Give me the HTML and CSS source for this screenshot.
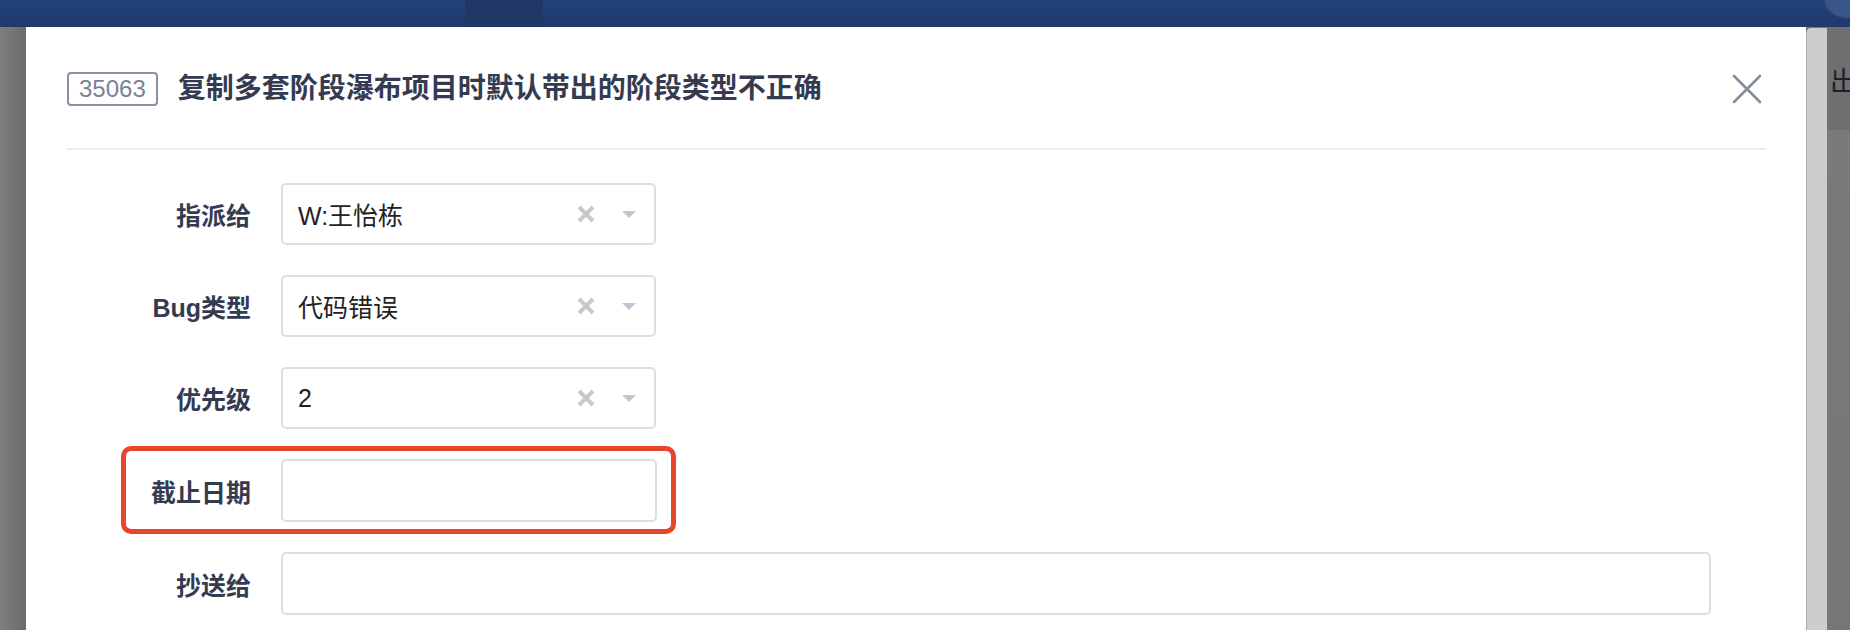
FILE: index.html
```html
<!DOCTYPE html>
<html lang="zh-CN">
<head>
  <meta charset="UTF-8">
  <meta name="viewport" content="width=device-width, initial-scale=1.0">
  <title>编辑Bug</title>
  <link rel="stylesheet" href="styles.css">
</head>
<body>
  <div class="topbar">
    <div class="topbar-tab"></div>
    <div class="topbar-avatar"></div>
  </div>

  <div class="stage">
    <div class="backdrop-left"></div>

    <div class="modal">
      <div class="modal-header">
        <span class="bug-id">35063</span>
        <h1 class="bug-title">复制多套阶段瀑布项目时默认带出的阶段类型不正确</h1>
        <button class="close-btn" type="button" aria-label="关闭">
          <svg width="30" height="30" viewBox="0 0 30 30">
            <path d="M2 2 L28 28 M28 2 L2 28" stroke="#878c9d" stroke-width="2.6" stroke-linecap="round" fill="none"/>
          </svg>
        </button>
      </div>

      <form class="bug-form">
        <div class="form-row">
          <label class="form-label">指派给</label>
          <div class="select-box">
            <span class="select-value">W:王怡栋</span>
            <span class="select-clear">
              <svg width="20" height="20" viewBox="0 0 20 20"><path d="M3 3 L17 17 M17 3 L3 17" stroke="#c9c9c9" stroke-width="4" fill="none"/></svg>
            </span>
            <span class="select-caret"></span>
          </div>
        </div>

        <div class="form-row">
          <label class="form-label">Bug类型</label>
          <div class="select-box">
            <span class="select-value">代码错误</span>
            <span class="select-clear">
              <svg width="20" height="20" viewBox="0 0 20 20"><path d="M3 3 L17 17 M17 3 L3 17" stroke="#c9c9c9" stroke-width="4" fill="none"/></svg>
            </span>
            <span class="select-caret"></span>
          </div>
        </div>

        <div class="form-row">
          <label class="form-label">优先级</label>
          <div class="select-box">
            <span class="select-value">2</span>
            <span class="select-clear">
              <svg width="20" height="20" viewBox="0 0 20 20"><path d="M3 3 L17 17 M17 3 L3 17" stroke="#c9c9c9" stroke-width="4" fill="none"/></svg>
            </span>
            <span class="select-caret"></span>
          </div>
        </div>

        <div class="form-row highlighted">
          <label class="form-label" for="deadline">截止日期</label>
          <input class="text-input short" type="text" id="deadline">
          <div class="highlight-mark"></div>
        </div>

        <div class="form-row">
          <label class="form-label" for="mailto">抄送给</label>
          <input class="text-input wide" type="text" id="mailto">
        </div>
      </form>
    </div>

    <div class="scrollbar"></div>

    <div class="backdrop-right">
      <span class="backdrop-text">出</span>
    </div>
  </div>
</body>
</html>
```

FILE: styles.css
```css
html, body {
  margin: 0;
  height: 630px;
  overflow: hidden;
}

body {
  font-family: "Liberation Sans", "Noto Sans CJK SC", sans-serif;
  background-color: #767676;
}

.topbar {
  height: 27px;
  display: flex;
  justify-content: space-between;
  background: linear-gradient(#244379, #1f3a6b);
  overflow: hidden;
}

.topbar-tab {
  width: 78px;
  margin-left: 465px;
  background-color: #213867;
}

.topbar-avatar {
  width: 44px;
  height: 44px;
  margin: -26px -18px 0 0;
  border-radius: 50%;
  background-color: #3a5688;
}

.stage {
  display: flex;
  height: 603px;
}

.backdrop-left {
  width: 26px;
  background: linear-gradient(90deg, #7d7d7d, #6c6c6c);
}

.modal {
  flex: 1;
  background-color: #fff;
  padding: 0 40px 0 41px;
}

.modal-header {
  display: flex;
  align-items: center;
  height: 34px;
  padding: 45px 0 42px;
  border-bottom: 2px solid #ececec;
}

.bug-id {
  box-sizing: border-box;
  height: 34px;
  padding: 0 10px;
  border: 2px solid #8b90a3;
  border-radius: 4px;
  font-size: 24px;
  line-height: 30px;
  color: #7c8195;
}

.bug-title {
  flex: 1;
  margin: 0 0 0 20px;
  font-size: 28px;
  line-height: 34px;
  font-weight: bold;
  color: #343b51;
}

.close-btn {
  border: none;
  background: none;
  padding: 0;
  margin-right: 4px;
  width: 30px;
  height: 30px;
  cursor: pointer;
}

.close-btn svg {
  display: block;
}

.bug-form {
  padding-top: 33px;
}

.form-row {
  display: flex;
  align-items: center;
  gap: 30px;
  margin-bottom: 30px;
}

.form-label {
  width: 184px;
  text-align: right;
  font-size: 25px;
  font-weight: bold;
  color: #343b51;
}

.select-box {
  box-sizing: border-box;
  width: 375px;
  height: 62px;
  display: flex;
  align-items: center;
  padding: 0 18px 0 15px;
  border: 2px solid #dedede;
  border-radius: 5px;
}

.select-value {
  flex: 1;
  font-size: 25px;
  color: #222;
}

.select-clear svg {
  display: block;
}

.select-caret {
  margin-left: 26px;
  width: 0;
  height: 0;
  border-left: 7px solid transparent;
  border-right: 7px solid transparent;
  border-top: 7px solid #c3c6d2;
}

.text-input {
  box-sizing: border-box;
  height: 63px;
  border: 2px solid #dedede;
  border-radius: 5px;
  font-size: 25px;
  padding: 0 15px;
  outline: none;
}

.text-input.short {
  width: 376px;
}

.text-input.wide {
  width: 1430px;
}

.highlighted {
  position: relative;
}

.highlight-mark {
  position: absolute;
  left: 54px;
  top: -13px;
  width: 555px;
  height: 88px;
  box-sizing: border-box;
  border: 5px solid #e8452b;
  border-radius: 10px;
  pointer-events: none;
}

.scrollbar {
  width: 20px;
  margin-top: 1px;
  background-color: #cdcdcd;
  border-left: 1px solid #adadad;
  border-top-left-radius: 5px;
}

.backdrop-right {
  width: 23px;
  overflow: hidden;
  background: linear-gradient(#6f6f6f 0, #6f6f6f 103px, #7a7a7a 103px, #767676 100%);
}

.backdrop-text {
  display: block;
  margin: 38px 0 0 3px;
  font-family: "Noto Sans CJK SC", sans-serif;
  font-size: 27px;
  line-height: 30px;
  color: #1c2131;
  white-space: nowrap;
}
```
